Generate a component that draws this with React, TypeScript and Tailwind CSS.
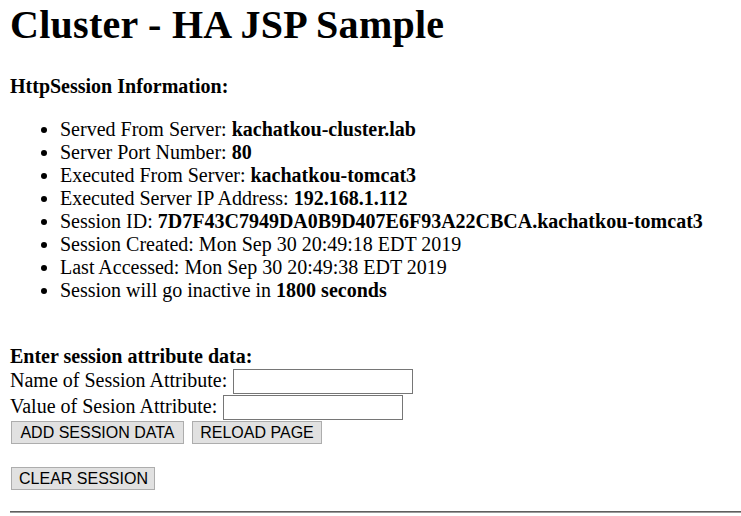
export default function App() {
  const items: [string, string, string?][] = [
    ["Served From Server: ", "kachatkou-cluster.lab"],
    ["Server Port Number: ", "80"],
    ["Executed From Server: ", "kachatkou-tomcat3"],
    ["Executed Server IP Address: ", "192.168.1.112"],
    ["Session ID: ", "7D7F43C7949DA0B9D407E6F93A22CBCA.kachatkou-tomcat3"],
    ["Session Created: Mon Sep 30 20:49:18 EDT 2019", ""],
    ["Last Accessed: Mon Sep 30 20:49:38 EDT 2019", ""],
    ["Session will go inactive in ", "1800", " seconds"],
  ];
  const btn =
    "h-[23px] px-[7px] border border-[#adadad] bg-[#e1e1e1] text-black text-[16px] leading-[19px] font-['Liberation_Sans',Arial,sans-serif] whitespace-nowrap text-center";
  return (
    <div className="min-h-[516px] bg-white pl-[10px] text-black text-[20px] leading-[23px] font-['Liberation_Serif','Times_New_Roman',serif]">
      <h1 className="pt-[1.5px] text-[40px] leading-[46px] font-bold tracking-[0.27px]">Cluster - HA JSP Sample</h1>
      <p className="mt-[27.25px] font-bold">HttpSession Information:</p>
      <ul className="mt-[20px] pl-[50px] list-disc">
        {items.map(([a, b, c], i) => (
          <li key={i}>
            {a}
            {b && <b>{b}</b>}
            {c && <b>{c}</b>}
          </li>
        ))}
      </ul>
      <p className="mt-[42.75px] font-bold">Enter session attribute data:</p>
      <div className="flex h-[26px] gap-[6px]">
        <span className="self-end mb-[2px]">Name of Session Attribute:</span>
        <input className="self-end h-[25px] w-[180px] border border-[#767676] bg-white" />
      </div>
      <div className="flex h-[26px] gap-[6px]">
        <span className="self-end mb-[2px]">Value of Sesion Attribute:</span>
        <input className="self-end h-[25px] w-[180px] border border-[#767676] bg-white" />
      </div>
      <div className="flex gap-[8px] mt-[1.5px] ml-[1px]">
        <button className={`${btn} w-[173px]`}>ADD SESSION DATA</button>
        <button className={`${btn} w-[130px]`}>RELOAD PAGE</button>
      </div>
      <div className="flex mt-[23px] ml-[1px]">
        <button className={`${btn} w-[144px]`}>CLEAR SESSION</button>
      </div>
      <div className="mt-[20.5px] h-[2px] border-t border-[#5f5f5f] bg-[#9a9a9a]" />
    </div>
  );
}
